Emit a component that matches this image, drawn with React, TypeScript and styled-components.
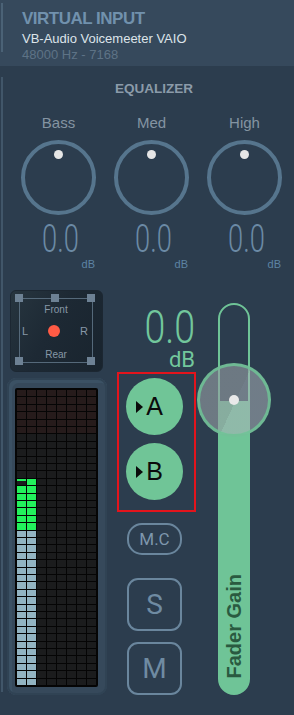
import React from 'react';
import styled, { createGlobalStyle } from 'styled-components';

const Global = createGlobalStyle`
  html, body { margin: 0; padding: 0; background: #2c3d4e; }
  body { width: 294px; height: 715px; overflow: hidden; }
`;

const Strip = styled.div`
  width: 294px;
  height: 715px;
  background: #2c3d4e;
  font-family: "Liberation Sans", Arial, sans-serif;
  overflow: hidden;
`;

const Header = styled.header`
  position: relative;
  height: 66px;
  box-sizing: border-box;
  background: #36495c;
  padding: 10px 0 0 22px;
  &::before {
    content: '';
    position: absolute;
    left: 1px;
    top: 3px;
    width: 2px;
    height: 49px;
    background: #4b6276;
  }
`;

const Title = styled.div`
  font-weight: 700;
  font-size: 17px;
  line-height: 18px;
  letter-spacing: -0.5px;
  color: #7191ad;
`;

const Device = styled.div`
  margin-top: 3px;
  font-size: 13px;
  line-height: 16px;
  color: #dde4ea;
`;

const Rate = styled.div`
  font-size: 13px;
  line-height: 16px;
  color: #5e7386;
`;

const Main = styled.main`
  position: relative;
  margin-top: 11px;
  padding-left: 3px;
  &::before {
    content: '';
    position: absolute;
    left: 1px;
    top: 0;
    width: 2px;
    height: 615px;
    background: #415669;
  }
`;

const EqSection = styled.section`
  display: flex;
  flex-direction: column;
`;

const EqTitle = styled.div`
  padding: 4px 0 0 11px;
  text-align: center;
  font-weight: 700;
  font-size: 13.5px;
  line-height: 16px;
  color: #8b9ba9;
`;

const KnobGrid = styled.div`
  display: grid;
  grid-template-columns: repeat(3, 93px);
  margin: 17px 0 0 9px;
`;

const KnobCol = styled.div`
  display: flex;
  flex-direction: column;
  align-items: center;
`;

const KnobLabel = styled.div`
  font-size: 15px;
  line-height: 18px;
  color: #8494a2;
`;

const EqKnob = styled.div`
  margin-top: 8px;
  width: 75px;
  height: 75px;
  box-sizing: border-box;
  border: 4px solid #56758d;
  border-radius: 50%;
  display: flex;
  justify-content: center;
  padding-top: 6px;
`;

const EqDot = styled.div`
  width: 9px;
  height: 9px;
  border-radius: 50%;
  background: #e6e6e6;
`;

const ValueRow = styled.div`
  align-self: stretch;
  display: flex;
  align-items: flex-end;
  margin-top: 4px;
  padding-left: 30px;
`;

const EqValue = styled.span`
  display: inline-block;
  font-family: Roboto, "Liberation Sans", sans-serif;
  font-weight: 300;
  font-size: 39px;
  line-height: 40px;
  color: #6b8aa5;
  transform: scaleX(0.7);
  transform-origin: left center;
  margin-right: -16px;
`;

const EqUnit = styled.span`
  margin: 0 0 -11px 3px;
  font-size: 11px;
  line-height: 12px;
  color: #5d84a4;
`;

const Bottom = styled.div`
  display: flex;
  margin-top: 31px;
  padding-left: 4px;
`;

const LeftCol = styled.div`
  width: 100px;
  display: flex;
  flex-direction: column;
  gap: 6px;
`;

const Panner = styled.div`
  margin-left: 3px;
  width: 93px;
  height: 82px;
  box-sizing: border-box;
  border-radius: 6px;
  border: 1px solid #1c2732;
  background: linear-gradient(120deg, #27353f 0%, #1d2934 45%, #19242e 100%);
  padding: 7px 9px 8px 8px;
`;

const PanFrame = styled.div`
  position: relative;
  height: 100%;
  box-sizing: border-box;
  border: 1.5px solid #55697a;
  display: flex;
  flex-direction: column;
  align-items: center;
  padding-top: 5px;
  color: #8798a7;
`;

const Handle = styled.span<{ $x: string; $y: string }>`
  position: absolute;
  left: ${p => p.$x};
  top: ${p => p.$y};
  width: 8px;
  height: 8px;
  margin: -4.75px 0 0 -4.75px;
  background: #6d8194;
`;

const PanText = styled.div`
  font-size: 10px;
  line-height: 12px;
`;

const PanMid = styled.div`
  align-self: stretch;
  display: flex;
  align-items: center;
  justify-content: space-between;
  height: 12px;
  margin-top: 9px;
  padding: 0 4px 0 2px;
  font-size: 11px;
`;

const PanDot = styled.span`
  width: 12px;
  height: 12px;
  border-radius: 50%;
  background: #ff5b45;
`;

const PanRear = styled(PanText)`
  margin-top: 12px;
`;

const MeterFrame = styled.div`
  width: 100px;
  height: 317px;
  box-sizing: border-box;
  border-radius: 9px;
  background: #36495b;
  box-shadow: inset 0 0 0 2px #304354, inset 3px 3px 0 2px #3b5164;
  padding: 10px 9px 8px 8px;
`;

const MeterGrid = styled.div`
  height: 100%;
  box-sizing: border-box;
  background: #050505;
  border-radius: 2px;
  padding: 2px;
  display: grid;
  grid-template-columns: repeat(8, 1fr);
  grid-template-rows: repeat(40, 1fr);
  gap: 1px;
`;

type CellKind = 'blue' | 'green' | 'partial' | 'red' | 'off';

const cellBg: Record<CellKind, string> = {
  blue: '#92b4c2',
  green: '#22f25c',
  partial: 'linear-gradient(to bottom, #22f25c 0, #22f25c 2px, #1b1c1d 2px)',
  red: '#261b1b',
  off: '#1b1c1d',
};

const Cell = styled.div<{ $kind: CellKind }>`
  background: ${p => cellBg[p.$kind]};
`;

const MidCol = styled.div`
  width: 79px;
  margin-left: 10px;
  display: flex;
  flex-direction: column;
`;

const Readout = styled.div`
  display: flex;
  flex-direction: column;
  align-items: flex-end;
  padding-right: 1px;
  color: #72c79c;
  font-family: Roboto, "Liberation Sans", sans-serif;
`;

const ReadValue = styled.span`
  display: inline-block;
  margin-top: 15px;
  font-weight: 300;
  font-size: 46px;
  line-height: 44px;
  transform: scaleX(0.815);
  transform-origin: right center;
`;

const ReadUnit = styled.span`
  font-size: 22px;
  line-height: 22px;
`;

const BusBox = styled.div`
  margin-top: 1px;
  height: 140px;
  box-sizing: border-box;
  border: 2px solid #e3141c;
  padding: 4px 0 0 7px;
  display: flex;
  flex-direction: column;
  gap: 8px;
`;

const BusButton = styled.div`
  width: 57px;
  height: 57px;
  box-sizing: border-box;
  border-radius: 50%;
  background: #70c597;
  display: flex;
  align-items: center;
  justify-content: center;
  gap: 3px;
  padding-right: 10px;
  color: #0b0b0b;
  font-size: 25px;
  line-height: 1;
`;

const Tri = styled.span`
  width: 0;
  height: 0;
  border-top: 6px solid transparent;
  border-bottom: 6px solid transparent;
  border-left: 7px solid #0b0b0b;
`;

const McButton = styled.div`
  margin: 11px 0 0 10px;
  width: 55px;
  height: 32px;
  box-sizing: border-box;
  border: 2px solid #6a869d;
  border-radius: 15px;
  display: flex;
  align-items: center;
  justify-content: center;
  font-family: Roboto, "Liberation Sans", sans-serif;
  font-size: 17px;
  color: #7e97ad;
`;

const SqButton = styled.div<{ $gap: number }>`
  margin: ${p => p.$gap}px 0 0 10px;
  width: 55px;
  height: 53px;
  box-sizing: border-box;
  border: 2px solid #6a869d;
  border-radius: 11px;
  display: flex;
  align-items: center;
  justify-content: center;
  font-family: Roboto, "Liberation Sans", sans-serif;
  font-size: 28px;
  color: #6f8ba2;
`;

const FaderCol = styled.div`
  width: 75px;
  margin-top: 13px;
  display: flex;
  justify-content: center;
`;

const Track = styled.div`
  position: relative;
  width: 32px;
  height: 392px;
  box-sizing: border-box;
  border: 2px solid #6fc497;
  border-radius: 16px;
  background: linear-gradient(to bottom, transparent 96px, #6fc497 96px);
  display: flex;
  flex-direction: column;
  justify-content: flex-end;
  align-items: center;
  padding-bottom: 15px;
`;

const FaderLabel = styled.span`
  writing-mode: vertical-rl;
  transform: rotate(180deg);
  font-weight: 700;
  font-size: 20px;
  line-height: 1;
  color: #2a5a40;
`;

const FaderKnob = styled.div`
  position: absolute;
  left: 50%;
  top: 58px;
  width: 74px;
  height: 74px;
  margin-left: -37px;
  box-sizing: border-box;
  border-radius: 50%;
  border: 3px solid rgba(111, 196, 151, 0.85);
  background: linear-gradient(115deg, rgba(150, 158, 164, 0.62) 52%, rgba(170, 178, 184, 0.55) 52%);
  display: flex;
  align-items: center;
  justify-content: center;
`;

const FaderDot = styled.span`
  width: 10px;
  height: 10px;
  border-radius: 50%;
  background: #e9e9e9;
`;

const bands = ['Bass', 'Med', 'High'];

function cellKind(r: number, c: number): CellKind {
  const b = 39 - r;
  if (c < 2 && b <= 20) return 'blue';
  if (c < 2 && b >= 21 && b <= 26) return 'green';
  if (b === 27 && c === 1) return 'green';
  if (b === 27 && c === 0) return 'partial';
  return r < 6 ? 'red' : 'off';
}

export default function App() {
  const cells: React.ReactNode[] = [];
  for (let r = 0; r < 40; r++) {
    for (let c = 0; c < 8; c++) {
      cells.push(<Cell key={`${r}-${c}`} $kind={cellKind(r, c)} />);
    }
  }
  return (
    <Strip>
      <Global />
      <Header>
        <Title>VIRTUAL INPUT</Title>
        <Device>VB-Audio Voicemeeter VAIO</Device>
        <Rate>48000 Hz - 7168</Rate>
      </Header>
      <Main>
        <EqSection>
          <EqTitle>EQUALIZER</EqTitle>
          <KnobGrid>
            {bands.map(b => (
              <KnobCol key={b}>
                <KnobLabel>{b}</KnobLabel>
                <EqKnob>
                  <EqDot />
                </EqKnob>
                <ValueRow>
                  <EqValue>0.0</EqValue>
                  <EqUnit>dB</EqUnit>
                </ValueRow>
              </KnobCol>
            ))}
          </KnobGrid>
        </EqSection>
        <Bottom>
          <LeftCol>
            <Panner>
              <PanFrame>
                <Handle $x="0%" $y="0%" />
                <Handle $x="50%" $y="0%" />
                <Handle $x="100%" $y="0%" />
                <Handle $x="0%" $y="100%" />
                <Handle $x="100%" $y="100%" />
                <PanText>Front</PanText>
                <PanMid>
                  <span>L</span>
                  <PanDot />
                  <span>R</span>
                </PanMid>
                <PanRear>Rear</PanRear>
              </PanFrame>
            </Panner>
            <MeterFrame>
              <MeterGrid>{cells}</MeterGrid>
            </MeterFrame>
          </LeftCol>
          <MidCol>
            <Readout>
              <ReadValue>0.0</ReadValue>
              <ReadUnit>dB</ReadUnit>
            </Readout>
            <BusBox>
              <BusButton>
                <Tri />
                <span>A</span>
              </BusButton>
              <BusButton>
                <Tri />
                <span>B</span>
              </BusButton>
            </BusBox>
            <McButton>M.C</McButton>
            <SqButton $gap={23}>S</SqButton>
            <SqButton $gap={11}>M</SqButton>
          </MidCol>
          <FaderCol>
            <Track>
              <FaderKnob>
                <FaderDot />
              </FaderKnob>
              <FaderLabel>Fader Gain</FaderLabel>
            </Track>
          </FaderCol>
        </Bottom>
      </Main>
    </Strip>
  );
}
